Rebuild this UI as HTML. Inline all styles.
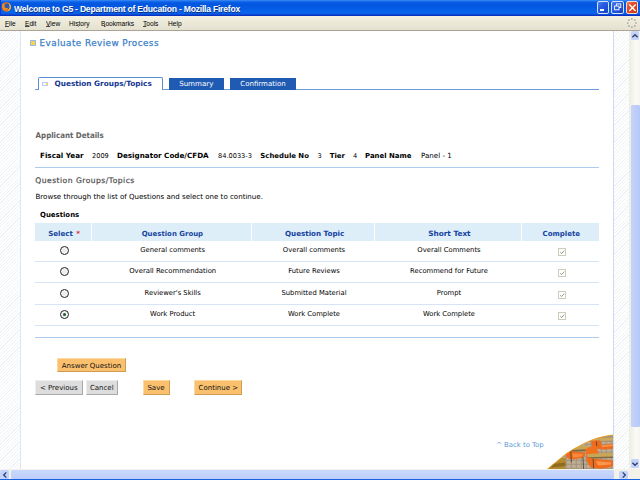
<!DOCTYPE html>
<html><head><meta charset="utf-8"><title>Welcome to G5 - Department of Education</title>
<style>
html,body{margin:0;padding:0;}
body{width:640px;height:480px;overflow:hidden;background:#fff;position:relative;font-family:"DejaVu Sans","Liberation Sans",sans-serif;font-size:7px;color:#000;}
.a{position:absolute;white-space:nowrap;line-height:10px;}
.b{font-weight:bold;}
#title{left:0;top:0;width:640px;height:15.6px;background:linear-gradient(#3f8ff6 0,#1a6eec 1.2px,#0358e2 3px,#0356e0 6px,#0560e8 10px,#0866ee 13px,#0a4ed8 14.4px,#0a30c0 15.6px);}
#ttext{left:14px;top:2.6px;color:#fff;font-family:"Liberation Sans",sans-serif;font-weight:bold;font-size:8.6px;letter-spacing:-0.23px;line-height:12px;text-shadow:0.5px 0.5px 0 #0a2a80;}
#menu{left:0;top:15.6px;width:640px;height:14.6px;background:linear-gradient(#f4f0e3,#ece9d8 45%,#e4e1d0);border-bottom:0.8px solid #aba396;}
.mi{top:18.5px;font-family:"Liberation Sans",sans-serif;font-size:6.6px;line-height:10px;color:#000;}
.mi u{text-decoration:underline;text-decoration-thickness:0.5px;text-underline-offset:0.3px;text-decoration-color:#444;}
.hatch{background:repeating-linear-gradient(135deg,#fff 0,#fff 1.6px,#eff3f6 1.6px,#eff3f6 2.4px);}
#lh{left:0;top:31px;width:20px;height:438px;}
#ll{left:20px;top:31px;width:1.3px;height:438px;background:#dde6f8;}
#rl{left:612.8px;top:31px;width:1.2px;height:438px;background:#c9dcf3;}
#rh{left:614px;top:31px;width:15px;height:438px;}
#vs{left:629.3px;top:31px;width:10.7px;height:438px;background:linear-gradient(90deg,#eeede3 0,#f3f2ea 3px,#fbfbf7 7px,#f6f5ee 10.7px);}
#hs{left:0;top:469.3px;width:640px;height:9.6px;background:#f3f2ea;}
#bb{left:0;top:478.8px;width:640px;height:1.2px;background:#1b62e0;}
.line{height:1px;}
.th{top:222.9px;height:17.8px;background:#ddeef8;}
.tht{top:229px;color:#15439f;font-weight:bold;text-align:center;}
.td{text-align:center;}
.radio{width:9.2px;height:9.2px;border-radius:50%;border:0.9px solid #222;background:radial-gradient(#ececec 30%,#fafafa 70%);box-sizing:border-box;left:60px;}
.cb{width:8.4px;height:8.4px;border:0.85px solid #cdcdbe;background:#fefefc;box-sizing:border-box;left:558px;}
.btn{box-sizing:border-box;height:14.5px;text-align:center;line-height:15.4px;font-size:7px;border-right:1px solid #cf9c52;border-bottom:1px solid #cf9c52;border-top:0.5px solid #fdd9a4;border-left:0.5px solid #fdd9a4;background:#fac06e;color:#111;}
.gbtn{background:#dddddd;border-right:1px solid #a9a9a9;border-bottom:1px solid #a9a9a9;border-top:0.5px solid #eee;border-left:0.5px solid #eee;}
.wb{top:1.2px;width:12px;height:13.2px;box-sizing:border-box;border:0.7px solid #d4e2fc;border-radius:2px;background:linear-gradient(135deg,#4f83ee 0,#2a5fe2 35%,#1f4fd4 70%,#1a43bc 100%);}
.sbb{background:#c3d3fb;border-radius:1.5px;}
</style></head><body>
<!-- window chrome -->
<div class="a" id="title"></div>
<svg class="a" style="left:1px;top:2px" width="11" height="10" viewBox="0 0 11 10"><circle cx="5.4" cy="5" r="4.7" fill="#ea6f14"/><circle cx="6.2" cy="4.4" r="3" fill="#2a56c0"/><path d="M7.2 0.8Q10.6 2.5 9.8 6.2Q9 8.6 6.4 9.4Q8.4 7.4 8.6 5Q8.6 2.6 7.2 0.8Z" fill="#f7c12c"/><path d="M0.9 3.2Q1.4 1.4 2.6 0.9Q2.6 2 3.6 2.6Q3 4 4 5.4Q5.4 6.6 7.4 5.8Q6.6 8.4 4 8.2Q1.2 7.4 0.9 3.2Z" fill="#f08a1c"/></svg>
<div class="a" style="left:0;top:0;width:1px;height:16px;background:#0a3ac8"></div><div class="a" id="ttext">Welcome to G5 - Department of Education - Mozilla Firefox</div>
<div class="a" id="menu"></div>
<div class="a mi" style="left:5px"><u>F</u>ile</div>
<div class="a mi" style="left:25px"><u>E</u>dit</div>
<div class="a mi" style="left:46px"><u>V</u>iew</div>
<div class="a mi" style="left:69px">Hi<u>s</u>tory</div>
<div class="a mi" style="left:101px"><u>B</u>ookmarks</div>
<div class="a mi" style="left:143px"><u>T</u>ools</div>
<div class="a mi" style="left:168px"><u>H</u>elp</div>

<!-- window buttons -->
<div class="a wb" style="left:597.2px"></div>
<div class="a" style="left:600.2px;top:9px;width:4.3px;height:1.9px;background:#fff"></div>
<div class="a wb" style="left:611.2px;width:12.9px"></div>
<svg class="a" style="left:613px;top:2px" width="10" height="11" viewBox="0 0 10 11"><rect x="3.4" y="1.9" width="4.4" height="3.6" fill="none" stroke="#fff" stroke-width="0.9"/><rect x="1.6" y="4" width="4.4" height="3.8" fill="#2a5fe0" stroke="#fff" stroke-width="0.9"/></svg>
<div class="a wb" style="left:626px;width:12.2px;background:linear-gradient(135deg,#ec8a6c 0,#e2502a 30%,#d8401a 70%,#c03410 100%);border-color:#f3d9d0"></div>
<svg class="a" style="left:628px;top:3px" width="9" height="9" viewBox="0 0 9 9"><path d="M1.3 1.4L7.6 7.9M7.6 1.4L1.3 7.9" stroke="#fff" stroke-width="1.4" fill="none"/></svg>
<!-- throbber -->
<svg class="a" style="left:626px;top:17px" width="12" height="12" viewBox="0 0 12 12"><circle cx="10.00" cy="6.00" r="0.85" fill="#a3a199"/><circle cx="8.80" cy="8.90" r="0.85" fill="#a3a199"/><circle cx="5.90" cy="10.10" r="0.85" fill="#a3a199"/><circle cx="3.00" cy="8.90" r="0.85" fill="#a3a199"/><circle cx="1.80" cy="6.00" r="0.85" fill="#a3a199"/><circle cx="3.00" cy="3.10" r="0.85" fill="#a3a199"/><circle cx="5.90" cy="1.90" r="0.85" fill="#a3a199"/><circle cx="8.80" cy="3.10" r="0.85" fill="#a3a199"/></svg>
<div class="a hatch" id="lh"></div><div class="a" id="ll"></div>
<div class="a" id="rl"></div><div class="a hatch" id="rh"></div>
<div class="a" id="vs"></div>
<div class="a" id="hs"></div><div class="a" id="bb"></div>


<div class="a sbb" style="left:630.8px;top:30.9px;width:8.6px;height:9.1px"></div>
<svg class="a" style="left:630.7px;top:32.6px" width="8" height="6" viewBox="0 0 8 6"><path d="M1.4 4.3L4 1.7L6.6 4.3" stroke="#2f3e6a" stroke-width="1.3" fill="none"/></svg>
<div class="a sbb" style="left:630.6px;top:105px;width:9.4px;height:322px;background:linear-gradient(90deg,#c7d2fb,#b4c9f9)"></div>
<div class="a sbb" style="left:630.8px;top:459px;width:8.6px;height:9.4px"></div>
<svg class="a" style="left:630.9px;top:461px" width="8" height="6" viewBox="0 0 8 6"><path d="M1.4 1.7L4 4.3L6.6 1.7" stroke="#2f3e6a" stroke-width="1.3" fill="none"/></svg>
<div class="a sbb" style="left:0;top:470.3px;width:9px;height:8.5px"></div>
<svg class="a" style="left:1.5px;top:470.8px" width="6" height="8" viewBox="0 0 6 8"><path d="M4.3 1.4L1.7 4L4.3 6.6" stroke="#2f3e6a" stroke-width="1.3" fill="none"/></svg>
<div class="a sbb" style="left:11px;top:470.3px;width:603px;height:8.5px;background:linear-gradient(#c9d8fd,#bccdfa)"></div>
<div class="a sbb" style="left:619.2px;top:470.5px;width:9px;height:8.3px"></div>
<svg class="a" style="left:621px;top:470.8px" width="6" height="8" viewBox="0 0 6 8"><path d="M1.7 1.4L4.3 4L1.7 6.6" stroke="#2f3e6a" stroke-width="1.3" fill="none"/></svg>
<!-- page -->
<div class="a" style="left:30px;top:40px;width:4px;height:4px;border:1px solid #9db7e6;background:#f6d34f"></div>
<div class="a" id="h1" style="left:39.6px;top:35.7px;font-size:8.8px;letter-spacing:0.46px;line-height:14px;color:#3c7fc8;-webkit-text-stroke:0.25px #3c7fc8">Evaluate Review Process</div>

<div class="a line" style="left:35px;top:89px;width:564.4px;background:#6b9cd9"></div>
<div class="a" style="left:38px;top:77px;width:125px;height:13px;border:1px solid #5a8fd6;border-bottom:none;background:#fff;box-sizing:border-box;border-radius:2px 2px 0 0"></div>
<div class="a" style="left:42.2px;top:81.8px;width:3.6px;height:2.4px;border:1px solid #bccaf1"></div>
<div class="a" style="left:45.6px;top:83.3px;width:2.6px;height:1.6px;background:#f0da6a"></div>
<div class="a b" id="t1" style="left:54.5px;top:79px;font-size:7.34px;color:#12358f">Question Groups/Topics</div>
<div class="a" style="left:169px;top:77.5px;width:54.5px;height:12px;background:#1f5bb2"></div>
<div class="a" id="t2" style="left:169px;top:78.5px;width:54.5px;text-align:center;font-size:7.09px;color:#fff">Summary</div>
<div class="a" style="left:230px;top:77.5px;width:66px;height:12px;background:#1f5bb2"></div>
<div class="a" id="t3" style="left:230px;top:78.5px;width:66px;text-align:center;font-size:7px;color:#fff">Confirmation</div>

<div class="a b" id="ad" style="left:35.6px;top:130.5px;font-family:'DejaVu Sans Condensed','DejaVu Sans',sans-serif;font-size:7.87px;color:#646464">Applicant Details</div>
<div class="a b" id="f1" style="top:150.6px;left:40px;font-size:7.2px">Fiscal Year</div>
<div class="a" id="f2" style="top:150.6px;left:92px;font-size:6.6px">2009</div>
<div class="a b" id="f3" style="top:150.6px;left:117px;font-size:7.2px">Designator Code/CFDA</div>
<div class="a" id="f4" style="top:150.6px;left:218px;font-size:6.6px">84.0033-3</div>
<div class="a b" id="f5" style="top:150.6px;left:260.3px;font-size:6.93px">Schedule No</div>
<div class="a" id="f6" style="top:150.6px;left:317.5px;font-size:6.6px">3</div>
<div class="a b" id="f7" style="top:150.6px;left:329.7px;font-size:6.93px">Tier</div>
<div class="a" id="f8" style="top:150.6px;left:353px;font-size:6.6px">4</div>
<div class="a b" id="f9" style="top:150.6px;left:365px;font-size:6.95px">Panel Name</div>
<div class="a" id="f10" style="top:150.6px;left:421px;font-size:7.1px">Panel - 1</div>
<div class="a line" style="left:35px;top:166.8px;width:564.4px;height:1.2px;background:#adcbee"></div>

<div class="a" id="qg" style="left:35.3px;top:175.7px;font-size:7.6px;letter-spacing:0.47px;color:#4e4e4e;-webkit-text-stroke:0.2px #4e4e4e">Question Groups/Topics</div>
<div class="a" id="br" style="left:35.5px;top:191.8px;font-size:7.07px">Browse through the list of Questions and select one to continue.</div>
<div class="a b" id="qs" style="left:40px;top:210.2px;font-size:6.95px">Questions</div>

<div class="a th" style="left:35px;width:56px"></div>
<div class="a th" style="left:92px;width:159px"></div>
<div class="a th" style="left:252.3px;width:121.5px"></div>
<div class="a th" style="left:375.3px;width:145.5px"></div>
<div class="a th" style="left:522.3px;width:76.5px"></div>
<div class="a tht" id="h_1" style="left:48.2px;font-size:7.09px">Select <span style="color:#e02020;margin-left:0.9px">*</span></div>
<div class="a tht" id="h_2" style="left:141.7px;font-size:6.96px">Question Group</div>
<div class="a tht" id="h_3" style="left:285px;font-size:7.15px">Question Topic</div>
<div class="a tht" id="h_4" style="left:428.2px;font-size:7.34px">Short Text</div>
<div class="a tht" id="h_5" style="left:542.5px;font-size:7px">Complete</div>

<div class="a line" style="left:35px;top:261px;width:564.4px;height:1.2px;background:#d6e4f5"></div>
<div class="a line" style="left:35px;top:282px;width:564.4px;height:1.2px;background:#d6e4f5"></div>
<div class="a line" style="left:35px;top:303.7px;width:564.4px;height:1.2px;background:#d6e4f5"></div>
<div class="a line" style="left:35px;top:325px;width:564.4px;height:1.2px;background:#d6e4f5"></div>
<div class="a line" style="left:35px;top:336.8px;width:564.4px;height:1.2px;background:#adcbee"></div>

<div class="a radio" style="top:246px"></div>
<div class="a radio" style="top:267.2px"></div>
<div class="a radio" style="top:288.6px"></div>
<div class="a radio" style="top:309.9px"></div>
<div class="a" style="left:62.9px;top:312.8px;width:3.4px;height:3.4px;border-radius:50%;background:#1d5a2a"></div>

<div class="a td r1" style="left:93.2px;width:159px;top:245.4px;font-size:6.8px">General comments</div>
<div class="a td r1" style="left:253px;width:122px;top:245.4px;font-size:6.8px">Overall comments</div>
<div class="a td r1" style="left:376px;width:146px;top:245.4px;font-size:6.8px">Overall Comments</div>
<div class="a td" style="left:93.2px;width:159px;top:266.4px;font-size:6.86px">Overall Recommendation</div>
<div class="a td" style="left:253px;width:122px;top:266.4px;font-size:6.8px">Future Reviews</div>
<div class="a td" style="left:376px;width:146px;top:266.4px;font-size:6.8px">Recommend for Future</div>
<div class="a td" style="left:93.2px;width:159px;top:287.7px;font-size:6.8px">Reviewer's Skills</div>
<div class="a td" style="left:253px;width:122px;top:287.7px;font-size:6.8px">Submitted Material</div>
<div class="a td" style="left:376px;width:146px;top:287.7px;font-size:6.8px">Prompt</div>
<div class="a td" style="left:93.2px;width:159px;top:309px;font-size:6.8px">Work Product</div>
<div class="a td" style="left:253px;width:122px;top:309px;font-size:6.8px">Work Complete</div>
<div class="a td" style="left:376px;width:146px;top:309px;font-size:6.8px">Work Complete</div>

<div class="a cb" style="top:248px"></div><svg class="a" style="left:558px;top:248px" width="9" height="9" viewBox="0 0 9 9"><path d="M2.3 4.1L3.6 5.6L6.2 2.6" stroke="#a09890" stroke-width="1" fill="none"/></svg>
<div class="a cb" style="top:269px"></div><svg class="a" style="left:558px;top:269px" width="9" height="9" viewBox="0 0 9 9"><path d="M2.3 4.1L3.6 5.6L6.2 2.6" stroke="#a09890" stroke-width="1" fill="none"/></svg>
<div class="a cb" style="top:290.5px"></div><svg class="a" style="left:558px;top:290.5px" width="9" height="9" viewBox="0 0 9 9"><path d="M2.3 4.1L3.6 5.6L6.2 2.6" stroke="#a09890" stroke-width="1" fill="none"/></svg>
<div class="a cb" style="top:312px"></div><svg class="a" style="left:558px;top:312px" width="9" height="9" viewBox="0 0 9 9"><path d="M2.3 4.1L3.6 5.6L6.2 2.6" stroke="#a09890" stroke-width="1" fill="none"/></svg>

<div class="a btn" style="left:57px;top:357.5px;width:69px">Answer Question</div>
<div class="a btn gbtn" style="left:35px;top:380px;width:47.5px">&lt; Previous</div>
<div class="a btn gbtn" style="left:85.5px;top:380px;width:32.5px">Cancel</div>
<div class="a btn" style="left:142.5px;top:380px;width:27px">Save</div>
<div class="a btn" style="left:194.2px;top:380px;width:48.3px">Continue &gt;</div>

<div class="a" id="btt" style="left:496.2px;top:439.5px;font-size:6.87px;color:#5a9ad8">^ Back to Top</div>

<svg class="a" style="left:546px;top:433px" width="67" height="36.3" viewBox="546 433 67 36.3">
<defs><clipPath id="cv"><path d="M547.2 469.3 L550.2 466.8 L553.2 464.3 L556.2 461.9 L559.2 459.4 L562.2 456.9 L565.1 454.6 L568.1 452.5 L571.1 450.6 L574.1 448.8 L577.1 447.2 L580.1 445.6 L583.1 444.0 L586.1 442.5 L589.1 441.2 L592.1 440.0 L595.1 438.9 L598.0 437.9 L601.0 437.2 L604.0 436.5 L607.0 435.9 L610.0 435.4 L613.0 435.1 L613 469.3Z"/></clipPath>
<pattern id="fl" width="5" height="4" patternUnits="userSpaceOnUse"><rect width="5" height="4" fill="#b7a58d"/><path d="M0 0.4H5M1.5 0V4" stroke="#a08e76" stroke-width="0.6"/><rect x="2.4" y="1.4" width="2" height="1.6" fill="#c6b6a0"/></pattern></defs>
<g clip-path="url(#cv)">
<rect x="546" y="433" width="67" height="37" fill="url(#fl)"/>
<rect x="546" y="433" width="67" height="9" fill="#a3937c"/>
<path d="M548 469.3L552 458.2L565.8 457.7L565.4 469.3Z" fill="#b28a30"/>
<path d="M553 464L565.5 462.5L565.4 466L551 467.5Z" fill="#8f6a22"/>
<path d="M593 438.8L613 437.4L613 440.4L593.4 441.2Z" fill="#cfa95a"/>
<path d="M591 441.4Q595 439.8 600.5 440.4L601.5 445L613 443.6L613 448.6Q604 450.2 598 448.8L592.4 447Z" fill="#ee6a1c"/>
<path d="M601 445.4L613 444.2L613 446L602 447.2Z" fill="#f89448"/>
<path d="M571.3 446.8L588.8 445.8L588.8 450.2L571.6 451Z" fill="#c9a455"/>
<path d="M571.3 450L588.8 449.2L588.8 451L571.6 451.8Z" fill="#7a6640"/>
<path d="M585 449.4Q590 445.6 596 446.4L599 453L598 455L586.4 455.4Z" fill="#f0701e"/>
<path d="M565.2 453Q566 450.8 570 451.3L584.6 452.4Q586.4 455.4 582.4 458L571 459.6Q565.6 458.2 565.2 453Z" fill="#ef6a1d"/>
<path d="M572 453.2L583 454Q583 456 580 457L573 457.6Z" fill="#f88a3c"/>
<path d="M587 454L613 452.8L613 457.2L588.6 458Z" fill="#c8a656"/>
<path d="M587 457.2L613 456.4L613 458L588.6 458.8Z" fill="#7e6a44"/>
<path d="M586 456.4L593.4 458.8L613 460.6L613 466.6L601 468.8L591 467.4Q586 462.4 586 456.4Z" fill="#f06c1c"/>
<path d="M596 461L611 462.4L611 464.6L598 465.4Z" fill="#f99650"/>
<path d="M570.8 451L571.4 462.4M583 457L583.6 469M593.2 458.6L593.6 468.4M596.4 441.4L596.8 446" stroke="#453d33" stroke-width="0.8" fill="none"/>
</g>
<path d="M547.2 469.3 L550.2 466.8 L553.2 464.3 L556.2 461.9 L559.2 459.4 L562.2 456.9 L565.1 454.6 L568.1 452.5 L571.1 450.6 L574.1 448.8 L577.1 447.2 L580.1 445.6 L583.1 444.0 L586.1 442.5 L589.1 441.2 L592.1 440.0 L595.1 438.9 L598.0 437.9 L601.0 437.2 L604.0 436.5 L607.0 435.9 L610.0 435.4 L613.0 435.1" stroke="#f0a428" stroke-width="1" fill="none"/>
</svg>
</body></html>
